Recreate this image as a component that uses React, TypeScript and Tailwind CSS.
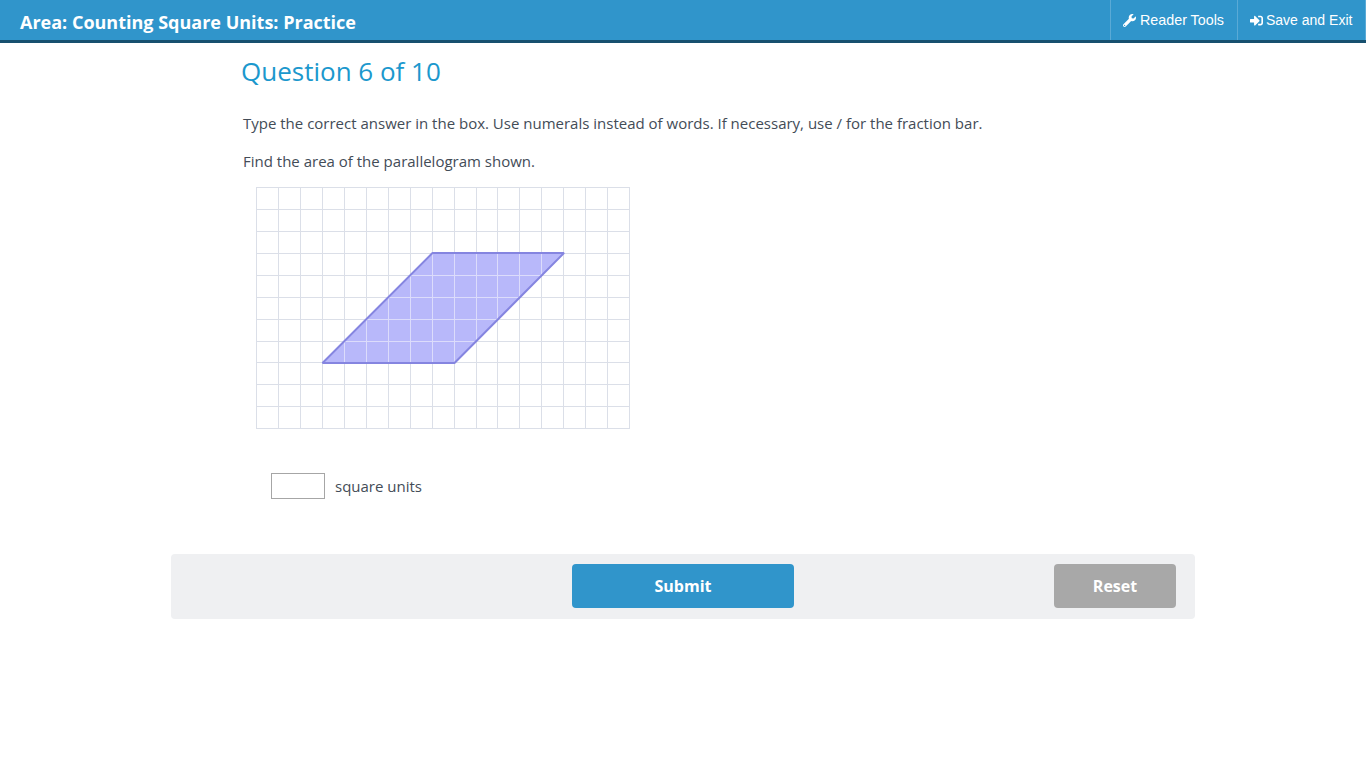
import { FaSignInAlt, FaWrench } from "react-icons/fa";

// grid lines sit on whole pixels, spacing is a little under 22
const xs = [256, 278, 300, 322, 344, 366, 388, 410, 432, 454, 476, 497, 519, 541, 563, 585, 607, 629];
const ys = [187, 209, 231, 253, 275, 297, 319, 341, 362, 384, 406, 428];

function GridFigure() {
  return (
    <svg width="376" height="244" viewBox="255 187 376 244" className="block">
      <rect x="256.5" y="187.5" width="373" height="241" fill="#ffffff" />
      {xs.map((x) => (
        <line key={x} x1={x + 0.5} y1="187" x2={x + 0.5} y2="429" stroke="#dbdfe8" strokeWidth="1" />
      ))}
      {ys.map((y) => (
        <line key={y} x1="256" y1={y + 0.5} x2="630" y2={y + 0.5} stroke="#dbdfe8" strokeWidth="1" />
      ))}
      <polygon points="322.5,363 432.5,253 564,253 454.5,363" fill="#b8b8fa" />
      {xs.slice(4, 14).map((x) => {
        const top = Math.max(253, 363 - (x + 0.5 - 322.5));
        const bottom = Math.min(363, 363 - (x + 0.5 - 454.5));
        return <line key={x} x1={x + 0.5} y1={top} x2={x + 0.5} y2={bottom} stroke="#dcdcfb" strokeWidth="1" />;
      })}
      {ys.slice(4, 8).map((y) => (
        <line key={y} x1={322.5 + (363 - y)} y1={y + 0.5} x2={454.5 + (363 - y)} y2={y + 0.5} stroke="#dcdcfb" strokeWidth="1" />
      ))}
      <polygon
        points="322.5,363 432.5,253 564,253 454.5,363"
        fill="none"
        stroke="#8585e0"
        strokeWidth="2"
        strokeLinejoin="bevel"
      />
    </svg>
  );
}

export default function App() {
  return (
    <div className="min-h-screen bg-white font-['Open_Sans',sans-serif] text-[15px] text-[#434c57]">
      <header className="flex h-[43px] items-start justify-between border-b-[3px] border-[#17506f] bg-[#3095cb]">
        <h1 className="pl-5 pt-[9px] text-[18px] font-bold leading-[26px] text-white">
          Area: Counting Square Units: Practice
        </h1>
        <div className="flex h-10 font-['Liberation_Sans',sans-serif] text-[14.3px] text-white">
          <button className="flex w-[127px] items-center gap-1 border-l border-[#5aaad6] pl-3 pt-[1px]">
            <FaWrench className="size-[13px]" />
            Reader Tools
          </button>
          <button className="flex w-[129px] items-center gap-[3px] border-x border-[#5aaad6] pl-3 pt-[1px] text-[14px]">
            <FaSignInAlt className="size-[13px]" />
            Save and Exit
          </button>
        </div>
      </header>

      <main className="mx-auto w-[1024px]">
        <h2 className="pl-[70px] pt-2 text-[26px] leading-[40px] text-[#1b98cd]">Question 6 of 10</h2>
        <p className="pl-[72px] pt-[21px] leading-[22px]">
          Type the correct answer in the box. Use numerals instead of words. If necessary, use / for the fraction bar.
        </p>
        <p className="pl-[72px] pt-4 leading-[22px]">Find the area of the parallelogram shown.</p>
        <div className="pl-[84px] pt-[15px]">
          <GridFigure />
        </div>
        <div className="flex items-center gap-[10px] pl-[100px] pt-[42px]">
          <input type="text" className="h-[26px] w-[54px] border border-[#a6a6a6] bg-white" />
          <span>square units</span>
        </div>
        <div className="relative mt-[55px] h-[65px] rounded bg-[#eff0f2]">
          <button className="absolute left-[401px] top-[10px] h-11 w-[222px] rounded-sm bg-[#3095cb] text-[16px] font-bold text-white">
            Submit
          </button>
          <button className="absolute left-[883px] top-[10px] h-11 w-[122px] rounded-sm bg-[#a8a8a8] text-[16px] font-bold text-white">
            Reset
          </button>
        </div>
      </main>
    </div>
  );
}
